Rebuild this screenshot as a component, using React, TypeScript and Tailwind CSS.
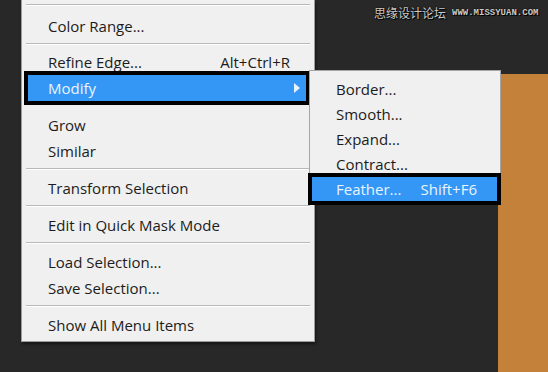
import React from "react";

type ItemProps = {
  label: string;
  shortcut?: string;
  h?: string;
};

function Item({ label, shortcut, h = "h-[26px]" }: ItemProps) {
  return (
    <div className={`${h} flex items-center justify-between pl-[26px] pr-[24px]`}>
      <span>{label}</span>
      {shortcut && <span>{shortcut}</span>}
    </div>
  );
}

function Separator() {
  return (
    <div className="h-[11px] pt-[4px] px-[4px]">
      <div className="h-px bg-[#b9b9b9]" />
      <div className="h-px bg-white" />
    </div>
  );
}

export default function App() {
  return (
    <div
      className="relative w-[548px] h-[372px] overflow-hidden bg-[#282828] flex text-[15px] text-[#1c1c1c]"
      style={{ fontFamily: '"Open Sans", "Noto Sans", sans-serif' }}
    >
      {/* Select menu */}
      <div className="ml-[21px] w-[294px] self-start bg-[#f0f0f0] border-x border-b border-[#9d9d9d] shadow-[1px_2px_3px_rgba(0,0,0,0.45)] pb-[3px]">
        <div className="h-[13px] pt-[4px] px-[4px]">
          <div className="h-px bg-[#b9b9b9]" />
          <div className="h-px bg-white" />
        </div>
        <Item label="Color Range..." />
        <Separator />
        <Item label="Refine Edge..." shortcut="Alt+Ctrl+R" h="h-[25px]" />
        <div className="h-[26px] ml-[6px] mr-[8px] flex items-center justify-between pl-[20px] pr-[6px] bg-[#3497f5] text-[#eaf4ff] outline-4 outline-black">
          <span>Modify</span>
          <svg width="6" height="10" viewBox="0 0 6 10">
            <path d="M0 0 L6 5 L0 10 Z" fill="#eaf4ff" />
          </svg>
        </div>
        <div className="h-[11px]" />
        <Item label="Grow" />
        <Item label="Similar" />
        <Separator />
        <Item label="Transform Selection" />
        <Separator />
        <Item label="Edit in Quick Mask Mode" />
        <Separator />
        <Item label="Load Selection..." />
        <Item label="Save Selection..." />
        <Separator />
        <Item label="Show All Menu Items" />
      </div>

      <div className="flex-1" />

      {/* canvas edge */}
      <div className="w-[50px] mt-[74px] bg-[#c4813a]" />

      {/* Modify submenu */}
      <div className="absolute left-[309px] top-[70px] w-[192px] bg-[#f0f0f0] border border-[#a5a5a5] pt-[6px] pb-[3px]">
        <Item label="Border..." h="h-[25px]" />
        <Item label="Smooth..." h="h-[25px]" />
        <Item label="Expand..." h="h-[25px]" />
        <Item label="Contract..." h="h-[25px]" />
        <div className="h-[24px] ml-[2px] mr-[3px] flex items-center justify-between pl-[24px] pr-[20px] bg-[#3497f5] text-[#eaf4ff] outline-4 outline-black">
          <span>Feather...</span>
          <span>Shift+F6</span>
        </div>
      </div>

      {/* watermark */}
      <div className="absolute top-[7px] left-[374px] flex items-center gap-[6px] text-[#c9c9c9] [text-shadow:0_0_2px_#000,1px_1px_0_#000]">
        <span
          className="text-[12px] leading-none"
          style={{ fontFamily: '"Noto Sans CJK SC", sans-serif' }}
        >
          思缘设计论坛
        </span>
        <span
          className="text-[9px] font-bold leading-none"
          style={{ fontFamily: '"Liberation Mono", monospace' }}
        >
          WWW.MISSYUAN.COM
        </span>
      </div>
    </div>
  );
}
